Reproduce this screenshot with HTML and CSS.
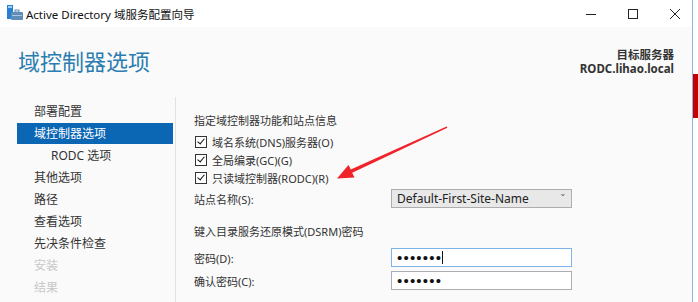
FILE: index.html
```html
<!DOCTYPE html>
<html>
<head>
    <title>Active Directory 域服务配置向导</title>
    <meta charset="utf-8">
    <link rel="stylesheet" href="styles.css">
</head>
<body>
    <div class="screen">
        <div class="window">
            <div class="titlebar">
                <svg class="app-icon" width="16" height="16" viewBox="0 0 16 16">
                    <rect x="0" y="0" width="6" height="14" fill="#2a7fd0"/>
                    <rect x="1" y="1" width="4" height="2" fill="#9fd0f5"/>
                    <rect x="4" y="7" width="12" height="8" rx="1" fill="#5f8db5"/>
                    <rect x="8" y="5" width="4" height="2" fill="none" stroke="#5f8db5" stroke-width="1"/>
                    <rect x="5" y="10" width="10" height="1" fill="#a9c7e2"/>
                </svg>
                <span class="title-text">Active Directory 域服务配置向导</span>
                <div class="win-controls">
                    <svg width="12" height="12" viewBox="0 0 12 12"><path d="M1 6.5h10" stroke="#222" stroke-width="1"/></svg>
                    <svg width="12" height="12" viewBox="0 0 12 12"><rect x="1.5" y="1.5" width="9" height="9" fill="none" stroke="#222" stroke-width="1"/></svg>
                    <svg width="12" height="12" viewBox="0 0 12 12"><path d="M1 1l10 10M11 1L1 11" stroke="#222" stroke-width="1"/></svg>
                </div>
            </div>

            <div class="content">
                <div class="header">
                    <h1 class="page-title">域控制器选项</h1>
                    <div class="target">
                        <div>目标服务器</div>
                        <div>RODC.lihao.local</div>
                    </div>
                </div>

                <div class="wizard">
                    <ul class="nav">
                        <li>部署配置</li>
                        <li class="active">域控制器选项</li>
                        <li class="sub">RODC 选项</li>
                        <li>其他选项</li>
                        <li>路径</li>
                        <li>查看选项</li>
                        <li>先决条件检查</li>
                        <li class="disabled">安装</li>
                        <li class="disabled">结果</li>
                    </ul>

                    <div class="main">
                        <div class="section-label">指定域控制器功能和站点信息</div>
                        <div class="checks">
                            <label class="check"><span class="box"></span>域名系统(DNS)服务器(O)</label>
                            <label class="check"><span class="box"></span>全局编录(GC)(G)</label>
                            <label class="check"><span class="box"></span>只读域控制器(RODC)(R)</label>
                        </div>
                        <div class="field site-field">
                            <span class="field-label">站点名称(S):</span>
                            <div class="select">
                                <span>Default-First-Site-Name</span>
                                <span class="chevron">ˇ</span>
                            </div>
                        </div>
                        <div class="section-label dsrm">键入目录服务还原模式(DSRM)密码</div>
                        <div class="field pw-field">
                            <span class="field-label">密码(D):</span>
                            <div class="input focused"><span class="dots">•••••••</span><span class="caret"></span></div>
                        </div>
                        <div class="field pw-field confirm">
                            <span class="field-label">确认密码(C):</span>
                            <div class="input"><span class="dots">•••••••</span></div>
                        </div>
                    </div>
                </div>
            </div>
        </div>
        <div class="backdrop">
            <div class="red-block"></div>
        </div>

        <svg class="annotation" width="698" height="302" viewBox="0 0 698 302">
            <polygon fill="#f0232b" points="337,178.5 348.5,164.9 350.8,169.6 446.6,126.5 447.4,127.7 352.2,172.8 354.5,177.5"/>
        </svg>
    </div>
</body>
</html>
```

FILE: styles.css
```css
body {
    margin: 0;
    font-family: "Noto Sans", "Noto Sans CJK SC", sans-serif;
    color: #222;
    background: #ffffff;
}

.screen {
    position: relative;
    display: flex;
    width: 698px;
    height: 302px;
    overflow: hidden;
}

.window {
    width: 692px;
    border-right: 1px solid #84b7e6;
    display: flex;
    flex-direction: column;
    background: #fafafa;
}

.titlebar {
    height: 27px;
    display: flex;
    align-items: center;
    background: #ffffff;
    padding-left: 7px;
}

.app-icon {
    margin-top: -1px;
}

.title-text {
    margin-left: 3px;
    font-size: 11.5px;
    color: #111;
}

.win-controls {
    margin-left: auto;
    display: flex;
    gap: 30px;
    margin-right: 11px;
}

.content {
    flex: 1;
    display: flex;
    flex-direction: column;
}

.header {
    display: flex;
    justify-content: space-between;
    padding: 19px 18px 0 18px;
}

.page-title {
    margin: 0;
    font-size: 22px;
    font-weight: normal;
    line-height: 31px;
    color: #2a7db0;
}

.target {
    text-align: right;
    font-size: 11.5px;
    font-weight: bold;
    line-height: 14px;
    color: #333;
    padding-top: 2px;
}

.wizard {
    display: flex;
    margin-top: 20px;
    flex: 1;
}

.nav {
    list-style: none;
    margin: 0 2px 0 17px;
    padding: 4px 0 0 0;
    width: 156px;
    font-size: 12px;
}

.nav li {
    height: 22px;
    line-height: 22px;
    padding-left: 17px;
    color: #333;
}

.nav li.active {
    background: #0b66b4;
    color: #ffffff;
    height: 21px;
    line-height: 21px;
    margin-bottom: 1px;
}

.nav li.sub {
    padding-left: 34px;
}

.nav li.disabled {
    color: #c8c8c8;
}

.main {
    flex: 1;
    border-left: 1px solid #e2e2e2;
    padding: 16px 0 0 18px;
    font-size: 11px;
    color: #333;
}

.section-label {
    line-height: 16px;
}

.checks {
    margin-top: 4px;
    display: flex;
    flex-direction: column;
}

.check {
    display: flex;
    align-items: center;
    height: 18px;
    gap: 5px;
}

.box {
    position: relative;
    width: 10px;
    height: 10px;
    margin-left: 1px;
    border: 1px solid #333;
    background: #fff;
}

.box::after {
    content: "";
    position: absolute;
    left: 3px;
    top: 0px;
    width: 3px;
    height: 6px;
    border: solid #111;
    border-width: 0 1.5px 1.5px 0;
    transform: rotate(40deg);
}

.field {
    display: flex;
    align-items: center;
}

.field-label {
    width: 197px;
}

.site-field {
    margin-top: 2px;
}

.select {
    height: 17px;
    border: 1px solid #adadad;
    background: #e8e8e8;
    display: flex;
    align-items: center;
    justify-content: space-between;
    padding: 0 0 0 5px;
    width: 174px;
    font-size: 12px;
    color: #222;
}

.chevron {
    font-size: 10px;
    color: #666;
    margin-right: 6px;
}

.dsrm {
    margin-top: 16px;
}

.pw-field {
    margin-top: 8px;
}

.pw-field.confirm {
    margin-top: 4px;
}

.input {
    width: 174px;
    height: 17px;
    padding-left: 5px;
    border: 1px solid #abadb3;
    background: #fff;
    display: flex;
    align-items: center;
}

.input.focused {
    border-color: #7eb4ea;
}

.dots {
    font-family: "Liberation Sans", sans-serif;
    font-size: 15px;
    letter-spacing: 1.2px;
    color: #111;
    line-height: 17px;
}

.caret {
    width: 1px;
    height: 13px;
    background: #111;
}

.backdrop {
    flex: 1;
    background: #ffffff;
    padding-top: 74px;
}

.red-block {
    height: 44px;
    background: #c40000;
}

.annotation {
    position: absolute;
    left: 0;
    top: 0;
    pointer-events: none;
}
```
